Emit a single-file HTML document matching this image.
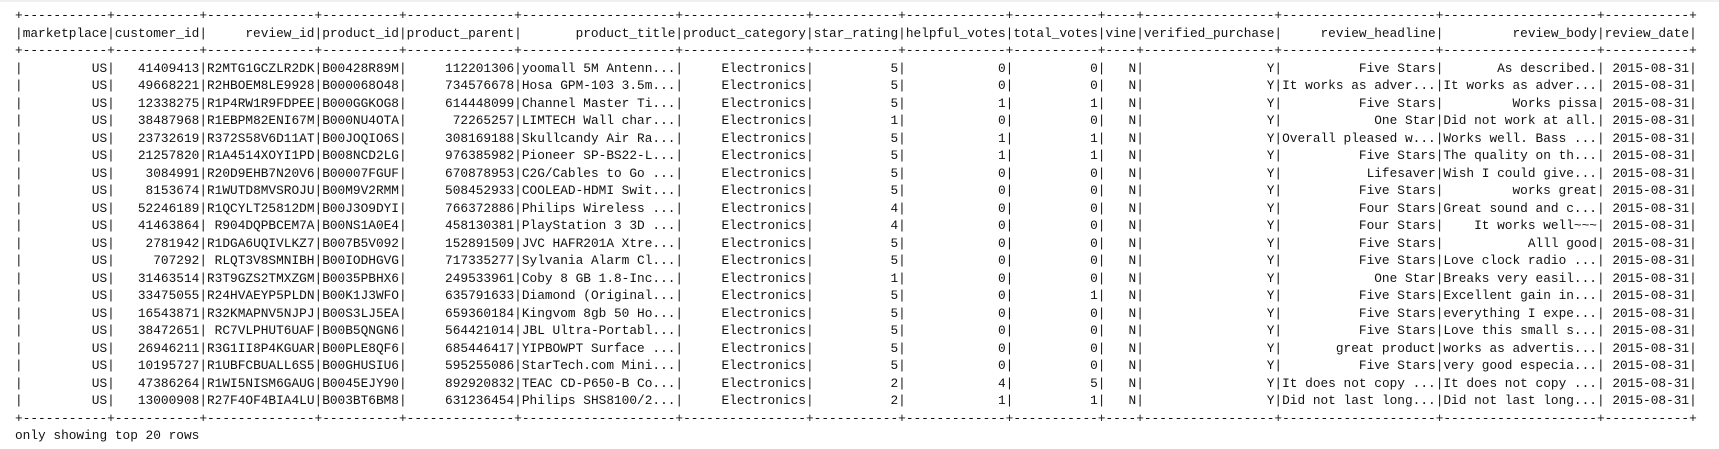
<!DOCTYPE html>
<html><head><meta charset="utf-8"><style>
html,body{margin:0;padding:0;background:#fff;width:1719px;height:449px;overflow:hidden}
body{border-top:2px solid #f0f0f0;box-sizing:border-box}
pre{margin:0;position:absolute;left:15px;top:7px;font-family:"Liberation Mono",monospace;font-size:12.8px;line-height:17.5px;color:#111;white-space:pre}
i{font-style:normal;display:inline-block;text-align:right;white-space:pre;overflow:hidden;vertical-align:top}
.s i{text-align:left}
.a{width:11ch}.b{width:14ch}.c{width:10ch}.d{width:20ch}.e{width:16ch}.f{width:13ch}.g{width:4ch}.h{width:17ch}
</style></head><body><pre><div class="s">+<i class="a">--------------------</i>+<i class="a">--------------------</i>+<i class="b">--------------------</i>+<i class="c">--------------------</i>+<i class="b">--------------------</i>+<i class="d">--------------------</i>+<i class="e">--------------------</i>+<i class="a">--------------------</i>+<i class="f">--------------------</i>+<i class="a">--------------------</i>+<i class="g">--------------------</i>+<i class="h">--------------------</i>+<i class="d">--------------------</i>+<i class="d">--------------------</i>+<i class="a">--------------------</i>+</div><div>|<i class="a">marketplace</i>|<i class="a">customer_id</i>|<i class="b">review_id</i>|<i class="c">product_id</i>|<i class="b">product_parent</i>|<i class="d">product_title</i>|<i class="e">product_category</i>|<i class="a">star_rating</i>|<i class="f">helpful_votes</i>|<i class="a">total_votes</i>|<i class="g">vine</i>|<i class="h">verified_purchase</i>|<i class="d">review_headline</i>|<i class="d">review_body</i>|<i class="a">review_date</i>|</div><div class="s">+<i class="a">--------------------</i>+<i class="a">--------------------</i>+<i class="b">--------------------</i>+<i class="c">--------------------</i>+<i class="b">--------------------</i>+<i class="d">--------------------</i>+<i class="e">--------------------</i>+<i class="a">--------------------</i>+<i class="f">--------------------</i>+<i class="a">--------------------</i>+<i class="g">--------------------</i>+<i class="h">--------------------</i>+<i class="d">--------------------</i>+<i class="d">--------------------</i>+<i class="a">--------------------</i>+</div><div>|<i class="a">US</i>|<i class="a">41409413</i>|<i class="b">R2MTG1GCZLR2DK</i>|<i class="c">B00428R89M</i>|<i class="b">112201306</i>|<i class="d">yoomall 5M Antenn...</i>|<i class="e">Electronics</i>|<i class="a">5</i>|<i class="f">0</i>|<i class="a">0</i>|<i class="g">N</i>|<i class="h">Y</i>|<i class="d">Five Stars</i>|<i class="d">As described.</i>|<i class="a">2015-08-31</i>|</div><div>|<i class="a">US</i>|<i class="a">49668221</i>|<i class="b">R2HBOEM8LE9928</i>|<i class="c">B000068O48</i>|<i class="b">734576678</i>|<i class="d">Hosa GPM-103 3.5m...</i>|<i class="e">Electronics</i>|<i class="a">5</i>|<i class="f">0</i>|<i class="a">0</i>|<i class="g">N</i>|<i class="h">Y</i>|<i class="d">It works as adver...</i>|<i class="d">It works as adver...</i>|<i class="a">2015-08-31</i>|</div><div>|<i class="a">US</i>|<i class="a">12338275</i>|<i class="b">R1P4RW1R9FDPEE</i>|<i class="c">B000GGKOG8</i>|<i class="b">614448099</i>|<i class="d">Channel Master Ti...</i>|<i class="e">Electronics</i>|<i class="a">5</i>|<i class="f">1</i>|<i class="a">1</i>|<i class="g">N</i>|<i class="h">Y</i>|<i class="d">Five Stars</i>|<i class="d">Works pissa</i>|<i class="a">2015-08-31</i>|</div><div>|<i class="a">US</i>|<i class="a">38487968</i>|<i class="b">R1EBPM82ENI67M</i>|<i class="c">B000NU4OTA</i>|<i class="b">72265257</i>|<i class="d">LIMTECH Wall char...</i>|<i class="e">Electronics</i>|<i class="a">1</i>|<i class="f">0</i>|<i class="a">0</i>|<i class="g">N</i>|<i class="h">Y</i>|<i class="d">One Star</i>|<i class="d">Did not work at all.</i>|<i class="a">2015-08-31</i>|</div><div>|<i class="a">US</i>|<i class="a">23732619</i>|<i class="b">R372S58V6D11AT</i>|<i class="c">B00JOQIO6S</i>|<i class="b">308169188</i>|<i class="d">Skullcandy Air Ra...</i>|<i class="e">Electronics</i>|<i class="a">5</i>|<i class="f">1</i>|<i class="a">1</i>|<i class="g">N</i>|<i class="h">Y</i>|<i class="d">Overall pleased w...</i>|<i class="d">Works well. Bass ...</i>|<i class="a">2015-08-31</i>|</div><div>|<i class="a">US</i>|<i class="a">21257820</i>|<i class="b">R1A4514XOYI1PD</i>|<i class="c">B008NCD2LG</i>|<i class="b">976385982</i>|<i class="d">Pioneer SP-BS22-L...</i>|<i class="e">Electronics</i>|<i class="a">5</i>|<i class="f">1</i>|<i class="a">1</i>|<i class="g">N</i>|<i class="h">Y</i>|<i class="d">Five Stars</i>|<i class="d">The quality on th...</i>|<i class="a">2015-08-31</i>|</div><div>|<i class="a">US</i>|<i class="a">3084991</i>|<i class="b">R20D9EHB7N20V6</i>|<i class="c">B00007FGUF</i>|<i class="b">670878953</i>|<i class="d">C2G/Cables to Go ...</i>|<i class="e">Electronics</i>|<i class="a">5</i>|<i class="f">0</i>|<i class="a">0</i>|<i class="g">N</i>|<i class="h">Y</i>|<i class="d">Lifesaver</i>|<i class="d">Wish I could give...</i>|<i class="a">2015-08-31</i>|</div><div>|<i class="a">US</i>|<i class="a">8153674</i>|<i class="b">R1WUTD8MVSROJU</i>|<i class="c">B00M9V2RMM</i>|<i class="b">508452933</i>|<i class="d">COOLEAD-HDMI Swit...</i>|<i class="e">Electronics</i>|<i class="a">5</i>|<i class="f">0</i>|<i class="a">0</i>|<i class="g">N</i>|<i class="h">Y</i>|<i class="d">Five Stars</i>|<i class="d">works great</i>|<i class="a">2015-08-31</i>|</div><div>|<i class="a">US</i>|<i class="a">52246189</i>|<i class="b">R1QCYLT25812DM</i>|<i class="c">B00J3O9DYI</i>|<i class="b">766372886</i>|<i class="d">Philips Wireless ...</i>|<i class="e">Electronics</i>|<i class="a">4</i>|<i class="f">0</i>|<i class="a">0</i>|<i class="g">N</i>|<i class="h">Y</i>|<i class="d">Four Stars</i>|<i class="d">Great sound and c...</i>|<i class="a">2015-08-31</i>|</div><div>|<i class="a">US</i>|<i class="a">41463864</i>|<i class="b">R904DQPBCEM7A</i>|<i class="c">B00NS1A0E4</i>|<i class="b">458130381</i>|<i class="d">PlayStation 3 3D ...</i>|<i class="e">Electronics</i>|<i class="a">4</i>|<i class="f">0</i>|<i class="a">0</i>|<i class="g">N</i>|<i class="h">Y</i>|<i class="d">Four Stars</i>|<i class="d">It works well~~~</i>|<i class="a">2015-08-31</i>|</div><div>|<i class="a">US</i>|<i class="a">2781942</i>|<i class="b">R1DGA6UQIVLKZ7</i>|<i class="c">B007B5V092</i>|<i class="b">152891509</i>|<i class="d">JVC HAFR201A Xtre...</i>|<i class="e">Electronics</i>|<i class="a">5</i>|<i class="f">0</i>|<i class="a">0</i>|<i class="g">N</i>|<i class="h">Y</i>|<i class="d">Five Stars</i>|<i class="d">Alll good</i>|<i class="a">2015-08-31</i>|</div><div>|<i class="a">US</i>|<i class="a">707292</i>|<i class="b">RLQT3V8SMNIBH</i>|<i class="c">B00IODHGVG</i>|<i class="b">717335277</i>|<i class="d">Sylvania Alarm Cl...</i>|<i class="e">Electronics</i>|<i class="a">5</i>|<i class="f">0</i>|<i class="a">0</i>|<i class="g">N</i>|<i class="h">Y</i>|<i class="d">Five Stars</i>|<i class="d">Love clock radio ...</i>|<i class="a">2015-08-31</i>|</div><div>|<i class="a">US</i>|<i class="a">31463514</i>|<i class="b">R3T9GZS2TMXZGM</i>|<i class="c">B0035PBHX6</i>|<i class="b">249533961</i>|<i class="d">Coby 8 GB 1.8-Inc...</i>|<i class="e">Electronics</i>|<i class="a">1</i>|<i class="f">0</i>|<i class="a">0</i>|<i class="g">N</i>|<i class="h">Y</i>|<i class="d">One Star</i>|<i class="d">Breaks very easil...</i>|<i class="a">2015-08-31</i>|</div><div>|<i class="a">US</i>|<i class="a">33475055</i>|<i class="b">R24HVAEYP5PLDN</i>|<i class="c">B00K1J3WFO</i>|<i class="b">635791633</i>|<i class="d">Diamond (Original...</i>|<i class="e">Electronics</i>|<i class="a">5</i>|<i class="f">0</i>|<i class="a">1</i>|<i class="g">N</i>|<i class="h">Y</i>|<i class="d">Five Stars</i>|<i class="d">Excellent gain in...</i>|<i class="a">2015-08-31</i>|</div><div>|<i class="a">US</i>|<i class="a">16543871</i>|<i class="b">R32KMAPNV5NJPJ</i>|<i class="c">B00S3LJ5EA</i>|<i class="b">659360184</i>|<i class="d">Kingvom 8gb 50 Ho...</i>|<i class="e">Electronics</i>|<i class="a">5</i>|<i class="f">0</i>|<i class="a">0</i>|<i class="g">N</i>|<i class="h">Y</i>|<i class="d">Five Stars</i>|<i class="d">everything I expe...</i>|<i class="a">2015-08-31</i>|</div><div>|<i class="a">US</i>|<i class="a">38472651</i>|<i class="b">RC7VLPHUT6UAF</i>|<i class="c">B00B5QNGN6</i>|<i class="b">564421014</i>|<i class="d">JBL Ultra-Portabl...</i>|<i class="e">Electronics</i>|<i class="a">5</i>|<i class="f">0</i>|<i class="a">0</i>|<i class="g">N</i>|<i class="h">Y</i>|<i class="d">Five Stars</i>|<i class="d">Love this small s...</i>|<i class="a">2015-08-31</i>|</div><div>|<i class="a">US</i>|<i class="a">26946211</i>|<i class="b">R3G1II8P4KGUAR</i>|<i class="c">B00PLE8QF6</i>|<i class="b">685446417</i>|<i class="d">YIPBOWPT Surface ...</i>|<i class="e">Electronics</i>|<i class="a">5</i>|<i class="f">0</i>|<i class="a">0</i>|<i class="g">N</i>|<i class="h">Y</i>|<i class="d">great product</i>|<i class="d">works as advertis...</i>|<i class="a">2015-08-31</i>|</div><div>|<i class="a">US</i>|<i class="a">10195727</i>|<i class="b">R1UBFCBUALL6S5</i>|<i class="c">B00GHUSIU6</i>|<i class="b">595255086</i>|<i class="d">StarTech.com Mini...</i>|<i class="e">Electronics</i>|<i class="a">5</i>|<i class="f">0</i>|<i class="a">0</i>|<i class="g">N</i>|<i class="h">Y</i>|<i class="d">Five Stars</i>|<i class="d">very good especia...</i>|<i class="a">2015-08-31</i>|</div><div>|<i class="a">US</i>|<i class="a">47386264</i>|<i class="b">R1WI5NISM6GAUG</i>|<i class="c">B0045EJY90</i>|<i class="b">892920832</i>|<i class="d">TEAC CD-P650-B Co...</i>|<i class="e">Electronics</i>|<i class="a">2</i>|<i class="f">4</i>|<i class="a">5</i>|<i class="g">N</i>|<i class="h">Y</i>|<i class="d">It does not copy ...</i>|<i class="d">It does not copy ...</i>|<i class="a">2015-08-31</i>|</div><div>|<i class="a">US</i>|<i class="a">13000908</i>|<i class="b">R27F4OF4BIA4LU</i>|<i class="c">B003BT6BM8</i>|<i class="b">631236454</i>|<i class="d">Philips SHS8100/2...</i>|<i class="e">Electronics</i>|<i class="a">2</i>|<i class="f">1</i>|<i class="a">1</i>|<i class="g">N</i>|<i class="h">Y</i>|<i class="d">Did not last long...</i>|<i class="d">Did not last long...</i>|<i class="a">2015-08-31</i>|</div><div class="s">+<i class="a">--------------------</i>+<i class="a">--------------------</i>+<i class="b">--------------------</i>+<i class="c">--------------------</i>+<i class="b">--------------------</i>+<i class="d">--------------------</i>+<i class="e">--------------------</i>+<i class="a">--------------------</i>+<i class="f">--------------------</i>+<i class="a">--------------------</i>+<i class="g">--------------------</i>+<i class="h">--------------------</i>+<i class="d">--------------------</i>+<i class="d">--------------------</i>+<i class="a">--------------------</i>+</div><div>only showing top 20 rows</div></pre></body></html>
